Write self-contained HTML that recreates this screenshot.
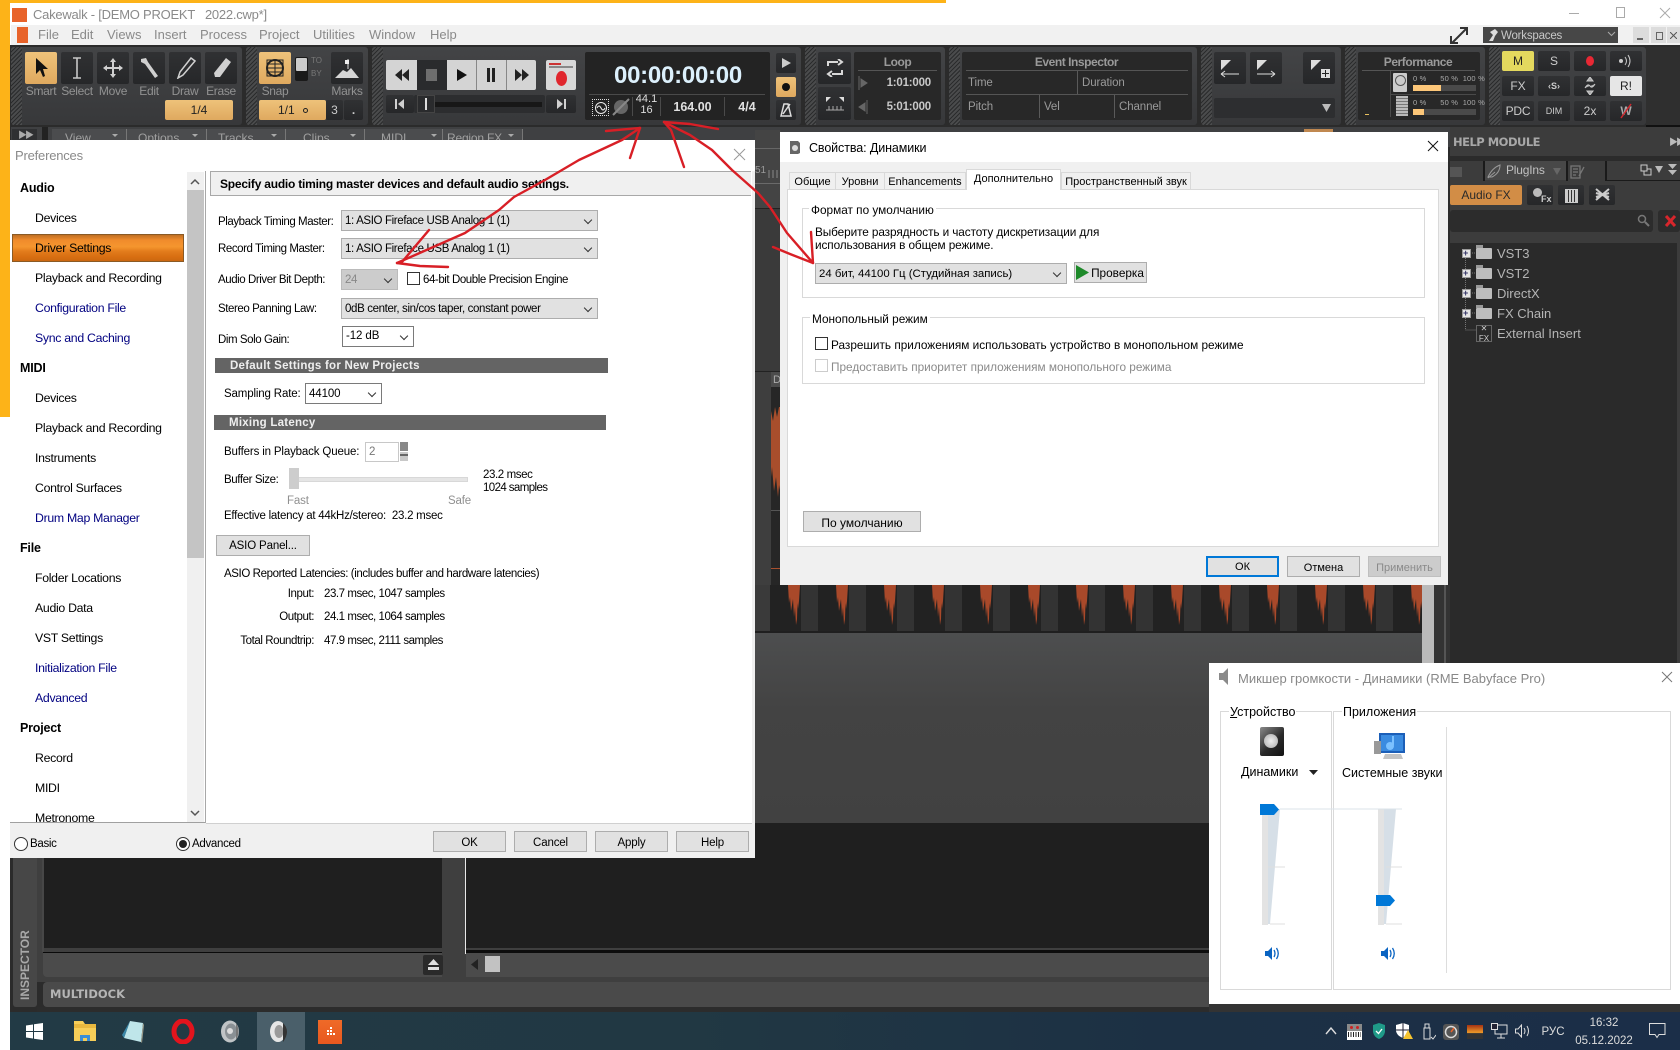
<!DOCTYPE html>
<html><head><meta charset="utf-8"><title>Cakewalk</title>
<style>
html,body{margin:0;padding:0;background:#fff}
#r{position:relative;width:1680px;height:1050px;overflow:hidden;background:#fff;font-family:"Liberation Sans","Noto Sans CJK SC",sans-serif;font-size:12px;color:#000}
#r div,#r svg{position:absolute}
.t{white-space:nowrap;line-height:16px;height:16px}
.p{background:linear-gradient(#434446,#37383a);border-radius:3px}
.p::before{content:"";position:absolute;left:0;top:0;bottom:0;width:11px;background:repeating-linear-gradient(135deg,#2a2b2c 0 1px,#4a4b4c 1px 3px);border-radius:3px 0 0 3px}
.b{background:linear-gradient(#303133,#262729);border-radius:2px}
.o{background:linear-gradient(#eec27a,#dfa95f);border-radius:2px}
.g{color:#929292;font-size:12px;text-align:center;letter-spacing:-.3px}
.w{background:#282828;border-radius:2px}
.dl{background:#5a5a5a}
.l{color:#9a9a9a;font-size:11.5px;letter-spacing:-.1px}
.ttl{color:#9a9a9a;font-size:12px;font-weight:bold;text-align:center;letter-spacing:-.45px}
.sel{background:#e1e1e1;border:1px solid #adadad;box-sizing:border-box;line-height:20px;padding-left:3px;font-size:11.5px;white-space:nowrap;letter-spacing:-.36px}
.sel::after{content:"";position:absolute;right:6px;top:50%;width:5px;height:5px;border-right:1px solid #333;border-bottom:1px solid #333;transform:translateY(-4px) rotate(45deg)}
.sw{background:#fff;border-color:#7a7a7a;letter-spacing:-.1px}
.btn{background:#e1e1e1;border:1px solid #adadad;box-sizing:border-box;text-align:center;line-height:21px;font-size:11.5px;white-space:nowrap;letter-spacing:-.15px}
.tr{font-size:12.3px;letter-spacing:-.3px}
.h{font-weight:bold;font-size:12.5px;letter-spacing:-.2px}
.bl{color:#000080}
.f{font-size:11.5px;letter-spacing:-.15px;margin-top:1px}
.fs{letter-spacing:-.43px}
.bar{background:#646464;color:#eee;font-weight:bold;font-size:11.5px;line-height:16px;white-space:nowrap;letter-spacing:.25px}
.ru{font-size:11.8px;white-space:nowrap;line-height:14px;height:14px;margin-top:1px}
.gb{border:1px solid #d9d9d9;box-sizing:border-box}
.tab{background:#f0f0f0;border:1px solid #d9d9d9;box-sizing:border-box;text-align:center;font-size:11px;line-height:18px;white-space:nowrap}
.tree{color:#b5b5b5;font-size:13px;left:1497px}
.plus{left:1462px;width:7px;height:7px;border:1px solid #9a9a9a;background:#e5e5e5}
.plus::after{content:"+";position:absolute;left:0;top:-4px;font-size:9px;font-weight:bold;color:#336;line-height:14px}
.fold{left:1476px;width:16px;height:11px;background:#bdbdbd;border-radius:1px}
.fold::before{content:"";position:absolute;left:0;top:-3px;width:7px;height:3px;background:#9a9a9a}
.m{font-family:"Liberation Sans",sans-serif;font-size:12.5px;white-space:nowrap}
.cell{top:585px;width:31px;height:46px;background:#222}
.ch{top:134px;width:0;height:0;border-left:3px solid transparent;border-right:3px solid transparent;border-top:3px solid #aaa}
</style></head><body><div id="r">

<!-- yellow desktop accents -->
<div style="left:0;top:0;width:946px;height:3px;background:#fdb318"></div>
<div style="left:0;top:0;width:10px;height:417px;background:#fdb318"></div>

<!-- title -->
<div style="left:12px;top:8px;width:15px;height:14px;background:#e8632a"></div>
<div class="t" style="left:33px;top:7px;color:#8a8a8a;font-size:13px;white-space:pre;letter-spacing:-.24px">Cakewalk - [DEMO PROEKT   2022.cwp*]</div>
<div style="left:1569px;top:13px;width:10px;height:1px;background:#aaa"></div>
<div style="left:1616px;top:7px;width:7px;height:9px;border:1px solid #aaa"></div>
<svg style="left:1659px;top:7px" width="12" height="12"><path d="M1 1L11 11M11 1L1 11" stroke="#aaa"/></svg>

<!-- menu -->
<div style="left:11px;top:25px;width:1669px;height:20px;background:#f1f1f1"></div>
<div style="left:17px;top:27px;width:11px;height:16px;background:#e8632a"></div>
<div class="t" style="left:38px;top:27px;color:#8a8a8a;font-size:13px">File</div>
<div class="t" style="left:71px;top:27px;color:#8a8a8a;font-size:13px">Edit</div>
<div class="t" style="left:107px;top:27px;color:#8a8a8a;font-size:13px">Views</div>
<div class="t" style="left:154px;top:27px;color:#8a8a8a;font-size:13px">Insert</div>
<div class="t" style="left:200px;top:27px;color:#8a8a8a;font-size:13px">Process</div>
<div class="t" style="left:259px;top:27px;color:#8a8a8a;font-size:13px">Project</div>
<div class="t" style="left:313px;top:27px;color:#8a8a8a;font-size:13px">Utilities</div>
<div class="t" style="left:369px;top:27px;color:#8a8a8a;font-size:13px">Window</div>
<div class="t" style="left:430px;top:27px;color:#8a8a8a;font-size:13px">Help</div>
<svg style="left:1450px;top:27px" width="18" height="17"><path d="M2 16L16 2M10 1H17V8M1 9V16H8" stroke="#333" stroke-width="2" fill="none"/></svg>
<div style="left:1483px;top:27px;width:135px;height:16px;background:#474747"></div>
<svg style="left:1487px;top:28px" width="14" height="14"><path d="M2 13L6 7 3 4 8 1 11 4 8 8 6 13Z" fill="#ddd"/></svg>
<div class="t" style="left:1501px;top:28px;color:#c8c8c8;font-size:11.5px;letter-spacing:-.2px">Workspaces</div>
<svg style="left:1607px;top:31px" width="9" height="6"><path d="M1 1L4.500 4.500 8 1" stroke="#aaa" fill="none"/></svg>
<div style="left:1633px;top:27px;width:16px;height:16px;background:#dcdcdc"></div>
<div style="left:1637px;top:38px;width:6px;height:2px;background:#666"></div>
<div style="left:1651px;top:27px;width:15px;height:16px;background:#dcdcdc"></div>
<div style="left:1656px;top:32px;width:5px;height:6px;border:1px solid #666"></div>
<div style="left:1667px;top:27px;width:13px;height:16px;background:#dcdcdc"></div>
<svg style="left:1670px;top:32px" width="7" height="7"><path d="M0 0L7 7M7 0L0 7" stroke="#555"/></svg>

<!-- app body -->
<div style="left:10px;top:45px;width:1670px;height:967px;background:#2b2b2b"></div>

<!-- toolbar panels -->
<div class="p" style="left:11px;top:47px;width:231px;height:78px"></div>
<div class="b o" style="left:25px;top:52px;width:32px;height:32px"></div>
<svg style="left:34px;top:57px" width="16" height="22"><path d="M2 1V17L6 13 9 20 11 19 9 12 14 12Z" fill="#111"/></svg>
<div class="b" style="left:61px;top:52px;width:32px;height:32px"></div>
<svg style="left:70px;top:56px" width="14" height="24"><path d="M3 2H11M7 2V22M3 22H11" stroke="#c8c8c8" stroke-width="1.600" fill="none"/></svg>
<div class="b" style="left:97px;top:52px;width:32px;height:32px"></div>
<svg style="left:102px;top:57px" width="22" height="22"><path d="M11 1L14 5H12V10H17V8L21 11 17 14V12H12V17H14L11 21 8 17H10V12H5V14L1 11 5 8V10H10V5H8Z" fill="#d0d0d0"/></svg>
<div class="b" style="left:133px;top:52px;width:32px;height:32px"></div>
<svg style="left:139px;top:57px" width="22" height="23"><path d="M2 2L7 1 9 5 19 19 16 21 6 7 2 5Z" fill="#d0d0d0"/></svg>
<div class="b" style="left:169px;top:52px;width:32px;height:32px"></div>
<svg style="left:176px;top:57px" width="20" height="22"><path d="M15 1L19 4 7 18 2 21 4 15Z" fill="none" stroke="#d0d0d0" stroke-width="1.500"/></svg>
<div class="b" style="left:205px;top:52px;width:32px;height:32px"></div>
<svg style="left:212px;top:57px" width="20" height="22"><path d="M14 1L19 5 8 20H3L2 16Z" fill="#d0d0d0"/></svg>
<div class="t g" style="left:21px;top:83px;width:40px">Smart</div>
<div class="t g" style="left:57px;top:83px;width:40px">Select</div>
<div class="t g" style="left:93px;top:83px;width:40px">Move</div>
<div class="t g" style="left:129px;top:83px;width:40px">Edit</div>
<div class="t g" style="left:165px;top:83px;width:40px">Draw</div>
<div class="t g" style="left:201px;top:83px;width:40px">Erase</div>
<div class="o" style="left:165px;top:100px;width:68px;height:20px"></div>
<div class="t" style="left:165px;top:102px;width:68px;text-align:center;color:#222">1/4</div>

<div class="p" style="left:246px;top:47px;width:122px;height:78px"></div>
<div class="o" style="left:259px;top:52px;width:32px;height:32px"></div>
<svg style="left:265px;top:58px" width="20" height="20"><circle cx="10" cy="10" r="8" fill="none" stroke="#222" stroke-width="2"/><path d="M2 10H18M10 2V18M4 6H16M4 14H16" stroke="#222"/><rect x="2" y="2" width="16" height="16" fill="none" stroke="#222"/></svg>
<div style="left:295px;top:57px;width:13px;height:24px;background:#1a1a1a;border-radius:2px"></div>
<div style="left:296px;top:58px;width:11px;height:13px;background:#ccc;border-radius:1px"></div>
<div class="t" style="left:311px;top:53px;color:#777;font-size:8px">TO</div>
<div class="t" style="left:311px;top:66px;color:#777;font-size:8px">BY</div>
<div class="b" style="left:331px;top:52px;width:32px;height:32px"></div>
<svg style="left:334px;top:58px" width="26" height="22"><path d="M1 20L9 12 13 14 17 10 25 20Z" fill="#d5d5d5"/><path d="M14 1V11" stroke="#ddd"/><path d="M11 2H15V6H11Z" fill="#eee"/></svg>
<div class="t g" style="left:257px;top:83px;width:36px">Snap</div>
<div class="t g" style="left:329px;top:83px;width:36px">Marks</div>
<div class="o" style="left:259px;top:100px;width:67px;height:20px"></div>
<div class="t" style="left:278px;top:102px;color:#222">1/1</div><div style="left:303px;top:108px;width:3px;height:3px;border:1px solid #222;border-radius:50%"></div>
<div class="b" style="left:326px;top:100px;width:17px;height:20px"></div><div class="t" style="left:326px;top:102px;width:17px;text-align:center;color:#ccc">3</div>
<div class="b" style="left:344px;top:100px;width:19px;height:20px"></div><div class="t" style="left:344px;top:102px;width:19px;text-align:center;color:#ccc;font-weight:bold">.</div>

<div class="p" style="left:372px;top:47px;width:429px;height:78px"></div>
<div style="left:386px;top:60px;width:150px;height:30px;background:#d4d4d4;border-radius:2px"></div>
<div style="left:417px;top:60px;width:30px;height:30px;background:#2a2b2d"></div>
<div style="left:476px;top:60px;width:1px;height:30px;background:#888"></div>
<div style="left:506px;top:60px;width:1px;height:30px;background:#888"></div>
<svg style="left:394px;top:68px" width="16" height="14"><path d="M8 1L1 7 8 13ZM15 1L8 7 15 13Z" fill="#222"/></svg>
<div style="left:426px;top:69px;width:11px;height:12px;background:#6e6e6e"></div>
<svg style="left:456px;top:68px" width="12" height="14"><path d="M1 1L11 7 1 13Z" fill="#111"/></svg>
<div style="left:487px;top:68px;width:3px;height:14px;background:#222"></div><div style="left:492px;top:68px;width:3px;height:14px;background:#222"></div>
<svg style="left:514px;top:68px" width="16" height="14"><path d="M1 1L8 7 1 13ZM8 1L15 7 8 13Z" fill="#222"/></svg>
<div style="left:546px;top:60px;width:30px;height:30px;background:#d8d8d8;border-radius:2px"></div>
<div style="left:549px;top:63px;width:12px;height:2px;background:#c33"></div><div style="left:549px;top:66px;width:24px;height:2px;background:#888"></div>
<div style="left:556px;top:71px;width:11px;height:15px;background:#e0262d;border-radius:50%"></div>
<div class="b" style="left:386px;top:95px;width:28px;height:18px"></div>
<svg style="left:395px;top:99px" width="10" height="10"><path d="M0 0H2V10H0ZM9 0V10L3 5Z" fill="#d0d0d0"/></svg>
<div class="b" style="left:414px;top:95px;width:131px;height:18px;background:#2c2d2f"></div>
<div style="left:417px;top:102px;width:125px;height:5px;background:#171717"></div>
<div style="left:417px;top:95px;width:18px;height:18px;background:#2a2b2d;border:1px solid #444;box-sizing:border-box"></div>
<div style="left:425px;top:98px;width:2px;height:12px;background:#ddd"></div>
<div class="b" style="left:546px;top:95px;width:30px;height:18px"></div>
<svg style="left:556px;top:99px" width="10" height="10"><path d="M1 0L7 5 1 10ZM8 0H10V10H8Z" fill="#d0d0d0"/></svg>

<div style="left:585px;top:52px;width:185px;height:68px;background:#232323;border-radius:2px"></div>
<div class="t" style="left:585px;top:63px;width:186px;height:26px;line-height:26px;text-align:center;color:#dcf0fc;font-size:24px;font-weight:bold;letter-spacing:-.25px">00:00:00:00</div>
<div style="left:589px;top:94px;width:176px;height:1px;background:#4a4a4a"></div>
<div style="left:592px;top:99px;width:15px;height:15px;border:1px dotted #ddd;background:#222"></div>
<svg style="left:594px;top:101px" width="14" height="14"><circle cx="7" cy="7" r="5.500" fill="none" stroke="#eee"/><path d="M3 7Q5 3 7 7T11 7" stroke="#eee" fill="none"/></svg>
<svg style="left:612px;top:98px" width="18" height="18"><circle cx="9" cy="9" r="7" fill="#666"/><path d="M1 17L17 1" stroke="#888" stroke-width="2"/></svg>
<div style="left:632px;top:97px;width:1px;height:19px;background:#4a4a4a"></div>
<div style="left:660px;top:97px;width:1px;height:19px;background:#4a4a4a"></div>
<div style="left:724px;top:97px;width:1px;height:19px;background:#4a4a4a"></div>
<div class="t" style="left:633px;top:93px;width:27px;text-align:center;color:#ddd;font-size:11px;line-height:13px">44.1</div>
<div class="t" style="left:633px;top:104px;width:27px;text-align:center;color:#ddd;font-size:11px;line-height:13px">16</div>
<div class="t" style="left:661px;top:99px;width:63px;text-align:center;color:#e0e0e0;font-size:12.5px;font-weight:bold">164.00</div>
<div class="t" style="left:725px;top:99px;width:44px;text-align:center;color:#e0e0e0;font-size:12.5px;font-weight:bold">4/4</div>
<div class="b" style="left:776px;top:53px;width:20px;height:20px"></div>
<svg style="left:782px;top:58px" width="9" height="10"><path d="M0 0L9 5 0 10Z" fill="#ccc"/></svg>
<div class="o" style="left:776px;top:77px;width:20px;height:20px"></div>
<div style="left:782px;top:83px;width:8px;height:8px;background:#111;border-radius:50%"></div>
<div class="b" style="left:776px;top:100px;width:20px;height:20px"></div>
<svg style="left:779px;top:102px" width="14" height="16"><path d="M5 2H9L12 14H2ZM4 12L11 2" fill="none" stroke="#ddd" stroke-width="1.500"/></svg>

<div class="p" style="left:805px;top:47px;width:140px;height:78px"></div>
<div class="b" style="left:818px;top:52px;width:33px;height:32px"></div>
<svg style="left:824px;top:59px" width="22" height="18"><path d="M4 7V3H14M18 11V15H8M14 0L18 3 14 6M8 12L4 15 8 18" stroke="#d8d8d8" stroke-width="2" fill="none"/></svg>
<div class="b" style="left:818px;top:87px;width:33px;height:33px"></div>
<svg style="left:825px;top:96px" width="20" height="16"><path d="M1 1H6L1 6ZM19 1H14L19 6Z" fill="#ddd"/><path d="M1 14H19M4 10V14M8 10V14M12 10V14M16 10V14" stroke="#aaa"/></svg>
<div class="w" style="left:854px;top:52px;width:87px;height:68px"></div>
<div class="t ttl" style="left:854px;top:54px;width:87px">Loop</div>
<div style="left:858px;top:70px;width:79px;height:1px;background:#555"></div>
<div class="t" style="right:749px;top:75px;color:#c8c8c8;font-size:11.5px;font-weight:bold;letter-spacing:-.2px">1:01:000</div>
<div class="t" style="right:749px;top:99px;color:#c8c8c8;font-size:11.5px;font-weight:bold;letter-spacing:-.2px">5:01:000</div>
<svg style="left:858px;top:76px" width="10" height="14"><path d="M1 0V14M3 3L9 7 3 11Z" stroke="#666" fill="#666"/></svg>
<svg style="left:858px;top:100px" width="10" height="14"><path d="M9 0V14M7 3L1 7 7 11Z" stroke="#666" fill="#666"/></svg>

<div class="p" style="left:949px;top:47px;width:248px;height:78px"></div>
<div class="w" style="left:962px;top:52px;width:230px;height:68px"></div>
<div class="t ttl" style="left:962px;top:54px;width:229px">Event Inspector</div>
<div style="left:966px;top:70px;width:222px;height:1px;background:#555"></div>
<div style="left:966px;top:94px;width:222px;height:1px;background:#555"></div>
<div class="dl" style="left:1077px;top:71px;width:1px;height:23px"></div>
<div class="dl" style="left:1039px;top:95px;width:1px;height:23px"></div>
<div class="dl" style="left:1114px;top:95px;width:1px;height:23px"></div>
<div class="t l" style="left:968px;top:75px">Time</div><div class="t l" style="left:1082px;top:75px">Duration</div>
<div class="t l" style="left:968px;top:99px">Pitch</div><div class="t l" style="left:1044px;top:99px">Vel</div><div class="t l" style="left:1119px;top:99px">Channel</div>

<div class="p" style="left:1201px;top:47px;width:140px;height:78px"></div>
<div class="b" style="left:1214px;top:52px;width:32px;height:32px"></div>
<svg style="left:1220px;top:59px" width="20" height="20"><path d="M1 1H11L1 11Z" fill="#ddd"/><path d="M1 15H19M1 15L5 12M1 15L5 18" stroke="#ddd" fill="none"/></svg>
<div class="b" style="left:1250px;top:52px;width:32px;height:32px"></div>
<svg style="left:1256px;top:59px" width="20" height="20"><path d="M1 1H11L1 11Z" fill="#ddd"/><path d="M1 15H19M19 15L15 12M19 15L15 18" stroke="#ddd" fill="none"/></svg>
<div class="b" style="left:1303px;top:52px;width:32px;height:32px"></div>
<svg style="left:1310px;top:59px" width="20" height="20"><path d="M1 1H11L1 11Z" fill="#ddd"/><rect x="11" y="10" width="9" height="9" fill="#ddd"/><path d="M15.500 11V18M12 14.500H19" stroke="#222"/></svg>
<div class="b" style="left:1214px;top:98px;width:121px;height:20px;background:#2d2e30"></div>
<svg style="left:1322px;top:104px" width="9" height="8"><path d="M0 0H9L4.500 8Z" fill="#bbb"/></svg>

<div class="p" style="left:1345px;top:47px;width:140px;height:78px"></div>
<div class="w" style="left:1358px;top:52px;width:122px;height:68px"></div>
<div class="t ttl" style="left:1358px;top:54px;width:120px">Performance</div>
<div style="left:1362px;top:70px;width:113px;height:1px;background:#555"></div>
<div style="left:1390px;top:71px;width:1px;height:46px;background:#4a4a4a"></div>
<div style="left:1391px;top:94px;width:85px;height:1px;background:#4a4a4a"></div>
<div style="left:1393px;top:73px;width:14px;height:19px;background:#ccc;border-radius:1px"></div>
<div style="left:1395px;top:75px;width:9px;height:9px;border:1px solid #555;border-radius:50%"></div>
<div style="left:1396px;top:96px;width:12px;height:20px;background:repeating-linear-gradient(#bbb 0 2px,#777 2px 3px)"></div>
<div class="t" style="left:1413px;top:71px;color:#aaa;font-size:7.500px;letter-spacing:.2px;white-space:pre">0 %      50 %  100 %</div>
<div class="t" style="left:1413px;top:95px;color:#aaa;font-size:7.500px;letter-spacing:.2px;white-space:pre">0 %      50 %  100 %</div>
<div style="left:1413px;top:85px;width:63px;height:6px;background:#4a4a4a"></div><div style="left:1413px;top:85px;width:28px;height:6px;background:#fdc779"></div>
<div style="left:1413px;top:109px;width:63px;height:6px;background:#4a4a4a"></div><div style="left:1413px;top:109px;width:11px;height:6px;background:#fdc779"></div>
<div style="left:1365px;top:114px;width:4px;height:1px;background:#e8c060"></div>

<div class="p" style="left:1489px;top:47px;width:157px;height:78px"></div>
<div style="left:1502px;top:51px;width:32px;height:20px;background:#e4d95e;border-radius:2px"></div>
<div class="t" style="left:1502px;top:53px;width:32px;text-align:center;font-size:12px;color:#222">M</div>
<div class="b" style="left:1538px;top:51px;width:32px;height:20px"></div><div class="t" style="left:1538px;top:53px;width:32px;text-align:center;color:#ccc;font-size:12px">S</div>
<div class="b" style="left:1574px;top:51px;width:32px;height:20px"></div><div style="left:1586px;top:56px;width:8px;height:10px;background:#e82834;border-radius:50%"></div>
<div class="b" style="left:1610px;top:51px;width:32px;height:20px"></div>
<svg style="left:1618px;top:54px" width="16" height="14"><circle cx="3" cy="7" r="2" fill="#ccc"/><path d="M7 3Q10 7 7 11M10 1Q14 7 10 13" stroke="#ccc" fill="none"/></svg>
<div class="b" style="left:1502px;top:76px;width:32px;height:20px"></div><div class="t" style="left:1502px;top:78px;width:32px;text-align:center;color:#ccc;font-size:12px">FX</div>
<div class="b" style="left:1538px;top:76px;width:32px;height:20px"></div><div class="t" style="left:1538px;top:78px;width:32px;text-align:center;color:#ccc;font-size:9px;font-weight:bold">‹S›</div>
<div class="b" style="left:1574px;top:76px;width:32px;height:20px"></div>
<svg style="left:1583px;top:77px" width="14" height="18"><path d="M7 0L10 4H4ZM7 18L10 14H4ZM2 11Q5 6 7 9T12 7" stroke="#ccc" fill="#ccc" fill-opacity=".8" stroke-width="1"/></svg>
<div style="left:1610px;top:76px;width:32px;height:20px;background:#e6e6e6;border-radius:2px"></div><div class="t" style="left:1610px;top:78px;width:32px;text-align:center;color:#222;font-size:12px">R!</div>
<div class="b" style="left:1502px;top:101px;width:32px;height:20px"></div><div class="t" style="left:1502px;top:103px;width:32px;text-align:center;color:#ccc;font-size:12px;letter-spacing:-.2px">PDC</div>
<div class="b" style="left:1538px;top:101px;width:32px;height:20px"></div><div class="t" style="left:1538px;top:103px;width:32px;text-align:center;color:#ccc;font-size:9px">DIM</div>
<div class="b" style="left:1574px;top:101px;width:32px;height:20px"></div><div class="t" style="left:1574px;top:103px;width:32px;text-align:center;color:#ccc;font-size:12px">2x</div>
<div class="b" style="left:1610px;top:101px;width:32px;height:20px"></div><div class="t" style="left:1610px;top:103px;width:32px;text-align:center;color:#aaa;font-size:12px;font-weight:bold">W</div>
<svg style="left:1619px;top:103px" width="14" height="16"><path d="M2 15L12 1" stroke="#d0282e" stroke-width="1.500"/></svg>
<div style="left:1646px;top:47px;width:34px;height:78px;background:#2f2f2f"></div>
<div style="left:1646px;top:125px;width:34px;height:2px;background:#111"></div>

<!-- secondary toolbar row -->
<div style="left:11px;top:127px;width:1439px;height:20px;background:#3f4042"></div>
<div style="left:12px;top:129px;width:25px;height:11px;background:#2f3032"></div>
<div class="t" style="left:18px;top:127px;color:#aaa;font-size:9px;letter-spacing:-2px">▶▶</div>
<div style="left:42px;top:127px;width:6px;height:13px;background:#222"></div>
<div style="left:52px;top:129px;width:470px;height:11px;background:#4b4c4e"></div>
<div class="t" style="left:65px;top:130px;color:#a0a0a0">View</div><div class="t" style="left:138px;top:130px;color:#a0a0a0">Options</div><div class="t" style="left:218px;top:130px;color:#a0a0a0">Tracks</div><div class="t" style="left:303px;top:130px;color:#a0a0a0">Clips</div><div class="t" style="left:381px;top:130px;color:#a0a0a0">MIDI</div><div class="t" style="left:447px;top:130px;color:#a0a0a0;letter-spacing:-.2px">Region FX</div>
<div style="left:126px;top:129px;width:1px;height:11px;background:#777"></div><div style="left:206px;top:129px;width:1px;height:11px;background:#777"></div><div style="left:285px;top:129px;width:1px;height:11px;background:#777"></div><div style="left:364px;top:129px;width:1px;height:11px;background:#777"></div><div style="left:442px;top:129px;width:1px;height:11px;background:#777"></div><div style="left:522px;top:129px;width:1px;height:11px;background:#777"></div>
<div class="ch" style="left:112px"></div><div class="ch" style="left:192px"></div><div class="ch" style="left:271px"></div><div class="ch" style="left:350px"></div><div class="ch" style="left:431px"></div><div class="ch" style="left:508px"></div>
<div style="left:1304px;top:129px;width:29px;height:5px;background:#c08850"></div>

<!-- middle strip between dialogs -->
<div style="left:752px;top:140px;width:3px;height:718px;background:#dcdcdc"></div>
<div style="left:755px;top:130px;width:26px;height:78px;background:#444"></div>
<div style="left:755px;top:148px;width:26px;height:1px;background:#666"></div>
<div style="left:755px;top:183px;width:26px;height:1px;background:#6a6a6a"></div>
<div class="t" style="left:755px;top:163px;color:#9a9a9a;font-size:10px">51</div>
<svg style="left:768px;top:170px" width="13" height="8"><path d="M1 0V8M5 0V8M9 0V8" stroke="#888"/></svg>
<div style="left:755px;top:208px;width:26px;height:1px;background:#222"></div>
<div style="left:755px;top:209px;width:26px;height:162px;background:#3a3a3a"></div>
<div style="left:755px;top:371px;width:26px;height:1px;background:#222"></div>
<div style="left:755px;top:372px;width:16px;height:213px;background:#3e3e3e"></div>
<div style="left:771px;top:372px;width:10px;height:261px;background:#262626"></div>
<div style="left:771px;top:372px;width:10px;height:15px;background:#4c4c4c"></div>
<div class="t" style="left:773px;top:372px;color:#aaa;font-size:11px">D</div>
<svg style="left:771px;top:407px" width="10" height="92"><path d="M0 4L2 14 4 0 6 10 8 0H10V88L8 78 7 90 5 70 3 84 1 60 0 70Z" fill="#a84e2c"/></svg>
<div style="left:771px;top:510px;width:10px;height:1px;background:#555"></div>
<div style="left:771px;top:568px;width:10px;height:1px;background:#a8502f"></div>

<!-- clips strip -->
<div style="left:755px;top:585px;width:667px;height:48px;background:#333"></div>
<div style="left:755px;top:585px;width:15px;height:46px;background:#3a3a3a"></div>
<div class="cell" style="left:770px"></div><div class="cell" style="left:818px"></div><div class="cell" style="left:866px"></div><div class="cell" style="left:914px"></div><div class="cell" style="left:962px"></div><div class="cell" style="left:1010px"></div><div class="cell" style="left:1058px"></div><div class="cell" style="left:1105px"></div><div class="cell" style="left:1153px"></div><div class="cell" style="left:1201px"></div><div class="cell" style="left:1249px"></div><div class="cell" style="left:1297px"></div><div class="cell" style="left:1345px"></div><div class="cell" style="left:1393px"></div>
<svg style="left:0;top:585px" width="1430" height="42"><path id="w" d="M788 0H800L799 16 798 24 797.500 18 797 34 796 40 795 22 794 32 793 14 791 26 790 12 789 18Z" fill="#a9492a"/><use href="#w" x="48"/><use href="#w" x="96"/><use href="#w" x="144"/><use href="#w" x="192"/><use href="#w" x="240"/><use href="#w" x="288"/><use href="#w" x="335"/><use href="#w" x="383"/><use href="#w" x="431"/><use href="#w" x="479"/><use href="#w" x="527"/><use href="#w" x="575"/><use href="#w" x="623"/></svg>
<div style="left:755px;top:631px;width:667px;height:2px;background:#1f1f1f"></div>
<div style="left:755px;top:633px;width:695px;height:190px;background:linear-gradient(#4d4e4f,#434343 40%,#414141)"></div>
<div style="left:1422px;top:585px;width:12px;height:78px;background:#bababa"></div>
<div style="left:1434px;top:585px;width:16px;height:240px;background:#333"></div>
<div style="left:1444px;top:585px;width:2px;height:240px;background:#555"></div>

<!-- track/inspector bottom -->
<div style="left:13px;top:858px;width:24px;height:149px;background:#474747;border-radius:0 0 3px 3px"></div>
<div class="t" style="left:-11px;top:956px;width:72px;color:#a9a9a9;font-weight:bold;font-size:12px;transform:rotate(-90deg);text-align:left">INSPECTOR</div>
<div style="left:37px;top:858px;width:1173px;height:124px;background:#3f3f3f"></div>
<div style="left:44px;top:858px;width:398px;height:90px;background:#1f1f1f"></div>
<div style="left:42px;top:858px;width:2px;height:94px;background:#474747"></div>
<div style="left:43px;top:952px;width:399px;height:1px;background:#0a0a0a"></div>
<div style="left:43px;top:953px;width:399px;height:24px;background:#4b4b4b;border-radius:0 0 0 4px"></div>
<div style="left:423px;top:955px;width:20px;height:20px;background:#2a2a2a;border-radius:2px"></div>
<svg style="left:428px;top:959px" width="11" height="12"><path d="M5.500 0L11 6H0ZM0 8H11V11H0Z" fill="#e0e0e0"/></svg>
<div style="left:465px;top:823px;width:745px;height:125px;background:#1f1f1f"></div>
<div style="left:465px;top:858px;width:1px;height:96px;background:#e8e8e8"></div>
<div style="left:466px;top:950px;width:744px;height:3px;background:#0d0d0d"></div>
<div style="left:466px;top:953px;width:744px;height:24px;background:#4b4b4b"></div>
<svg style="left:471px;top:959px" width="7" height="11"><path d="M7 0V11L0 5.500Z" fill="#222"/></svg>
<div style="left:485px;top:956px;width:15px;height:16px;background:#c2c2c2"></div>
<div style="left:43px;top:982px;width:1167px;height:25px;background:#4a4a4a;border-radius:4px 0 0 4px"></div>
<div class="t" style="left:50px;top:986px;color:#b5b5b5;font-family:'DejaVu Sans','Liberation Sans',sans-serif;font-weight:bold;font-size:11.500px">MULTIDOCK</div>
<div style="left:37px;top:1007px;width:1643px;height:5px;background:#2c2c2c"></div>

<!-- right panel -->
<div style="left:1450px;top:127px;width:230px;height:885px;background:#3c3c3c"></div>
<div class="t" style="left:1453px;top:134px;color:#a8a8a8;font-family:'DejaVu Sans','Liberation Sans',sans-serif;font-weight:bold;font-size:11.5px;letter-spacing:-.5px">HELP MODULE</div>
<div class="t" style="left:1669px;top:134px;color:#bbb;font-size:9px;letter-spacing:-2px">▶▶</div>
<div style="left:1450px;top:156px;width:230px;height:5px;background:#2b2b2b"></div>
<div style="left:1450px;top:161px;width:33px;height:20px;background:#3c3c3c"></div>
<div style="left:1450px;top:167px;width:12px;height:10px;background:#555"></div>
<div style="left:1483px;top:161px;width:2px;height:20px;background:#1a1a1a"></div>
<div style="left:1485px;top:161px;width:81px;height:19px;background:#484848"></div>
<svg style="left:1487px;top:164px" width="16" height="15"><path d="M1 13Q5 4 13 1 13 9 5 13ZM1 14L8 8" fill="none" stroke="#999"/></svg>
<div class="t" style="left:1506px;top:162px;color:#c0c0c0;font-size:12px;letter-spacing:-.2px">PlugIns</div>
<svg style="left:1553px;top:168px" width="8" height="7"><path d="M0 0H8L4 7Z" fill="#666"/></svg>
<div style="left:1566px;top:161px;width:2px;height:20px;background:#1a1a1a"></div>
<svg style="left:1570px;top:164px" width="16" height="15"><path d="M1 2H10V14H1ZM3 5H8M3 8H8M3 11H6M9 12L14 3" fill="none" stroke="#777" stroke-width="1.300"/></svg>
<div style="left:1605px;top:161px;width:2px;height:20px;background:#1a1a1a"></div>
<div style="left:1607px;top:180px;width:73px;height:1px;background:#1a1a1a"></div>
<svg style="left:1640px;top:164px" width="12" height="13"><path d="M1 1H7V7H1ZM4 7V11H11V5H7" fill="none" stroke="#ccc"/></svg>
<svg style="left:1655px;top:166px" width="8" height="8"><path d="M0 0H8L4 7Z" fill="#bbb"/></svg>
<svg style="left:1668px;top:164px" width="9" height="12"><path d="M0 0H9L4.500 5ZM0 6H9L4.500 11Z" fill="#bbb"/></svg>
<div style="left:1450px;top:185px;width:72px;height:20px;background:#d28d46;border-radius:2px"></div>
<div class="t" style="left:1450px;top:187px;width:72px;text-align:center;color:#2a2a2a;font-size:12px">Audio FX</div>
<div class="b" style="left:1527px;top:185px;width:26px;height:20px"></div>
<div style="left:1533px;top:188px;width:9px;height:9px;background:#bbb;border-radius:50%"></div>
<div class="t" style="left:1541px;top:192px;color:#ccc;font-size:9px;font-weight:bold;line-height:14px;height:14px">Fx</div>
<div class="b" style="left:1558px;top:185px;width:26px;height:20px"></div>
<div style="left:1565px;top:189px;width:11px;height:12px;border:1px solid #ccc;background:repeating-linear-gradient(90deg,#ccc 0 2px,#333 2px 3px)"></div>
<div class="b" style="left:1589px;top:185px;width:26px;height:20px"></div>
<svg style="left:1595px;top:187px" width="15" height="15"><path d="M1 2L14 13M1 6L14 10M1 10L14 6M1 13L14 2" stroke="#ccc" stroke-width="2"/></svg>
<div style="left:1450px;top:210px;width:203px;height:22px;background:#2c2c2c;border-radius:3px"></div>
<svg style="left:1637px;top:214px" width="13" height="14"><circle cx="5" cy="5" r="3.500" fill="none" stroke="#777" stroke-width="1.500"/><path d="M8 8L12 12" stroke="#777" stroke-width="2"/></svg>
<div style="left:1658px;top:210px;width:22px;height:22px;background:#2c2c2c;border-radius:3px"></div>
<svg style="left:1665px;top:215px" width="11" height="12"><path d="M1 1L10 11M10 1L1 11" stroke="#d8262c" stroke-width="3"/></svg>
<div style="left:1450px;top:243px;width:227px;height:769px;background:#2a2a2a"></div>
<svg style="left:1460px;top:250px" width="20" height="90"><path d="M5.500 4V80H16M8 3H16M8 23H16M8 43H16M8 63H16" stroke="#777" stroke-dasharray="1 1" fill="none"/></svg>
<div class="plus" style="top:249px"></div><div class="plus" style="top:269px"></div><div class="plus" style="top:289px"></div><div class="plus" style="top:309px"></div>
<div class="fold" style="top:248px"></div><div class="fold" style="top:268px"></div><div class="fold" style="top:288px"></div><div class="fold" style="top:308px"></div>
<div class="t tree" style="top:246px">VST3</div><div class="t tree" style="top:266px">VST2</div><div class="t tree" style="top:286px">DirectX</div><div class="t tree" style="top:306px">FX Chain</div><div class="t tree" style="top:326px">External Insert</div>
<div style="left:1476px;top:325px;width:14px;height:15px;border:1px solid #666;background:#2a2a2a"></div>
<div class="t" style="left:1477px;top:324px;width:14px;text-align:center;color:#ccc;font-size:8px;line-height:10px">✕<br>FX</div>

<!-- mid gap filler to the mixer -->
<div style="left:1209px;top:1004px;width:471px;height:8px;background:#333"></div>

<!-- Preferences dialog -->
<div style="left:10px;top:140px;width:745px;height:718px;background:#f0f0f0"></div>
<div style="left:10px;top:140px;width:745px;height:31px;background:#fff"></div>
<div class="t" style="left:15px;top:148px;color:#8a8a8a;font-size:13px;letter-spacing:-.2px">Preferences</div>
<svg style="left:733px;top:148px" width="13" height="13"><path d="M1 1L12 12M12 1L1 12" stroke="#999"/></svg>
<div style="left:10px;top:171px;width:195px;height:651px;background:#fff;border-bottom:1px solid #a0a0a0;box-sizing:content-box"></div>
<div style="left:205px;top:171px;width:1px;height:652px;background:#a8a8a8"></div>
<div style="left:187px;top:172px;width:17px;height:650px;background:#f0f0f0"></div>
<div style="left:187px;top:190px;width:17px;height:368px;background:#c4c4c4"></div>
<svg style="left:190px;top:178px" width="10" height="7"><path d="M1 6L5 2 9 6" fill="none" stroke="#555" stroke-width="1.500"/></svg>
<svg style="left:190px;top:810px" width="10" height="7"><path d="M1 1L5 5 9 1" fill="none" stroke="#555" stroke-width="1.500"/></svg>
<div style="left:12px;top:234px;width:172px;height:28px;background:linear-gradient(#b66a22,#f08b2c 22%,#f5962e 45%,#e27c1c 62%,#d96f12 80%,#c8660f);box-shadow:inset 0 0 0 1px #8a5a25"></div>
<div style="left:10px;top:171px;width:177px;height:651px;overflow:hidden">
<div class="t tr h" style="top:9px;left:10px">Audio</div>
<div class="t tr" style="top:39px;left:25px">Devices</div>
<div class="t tr" style="top:69px;left:25px">Driver Settings</div>
<div class="t tr" style="top:99px;left:25px">Playback and Recording</div>
<div class="t tr bl" style="top:129px;left:25px">Configuration File</div>
<div class="t tr bl" style="top:159px;left:25px">Sync and Caching</div>
<div class="t tr h" style="top:189px;left:10px">MIDI</div>
<div class="t tr" style="top:219px;left:25px">Devices</div>
<div class="t tr" style="top:249px;left:25px">Playback and Recording</div>
<div class="t tr" style="top:279px;left:25px">Instruments</div>
<div class="t tr" style="top:309px;left:25px">Control Surfaces</div>
<div class="t tr bl" style="top:339px;left:25px">Drum Map Manager</div>
<div class="t tr h" style="top:369px;left:10px">File</div>
<div class="t tr" style="top:399px;left:25px">Folder Locations</div>
<div class="t tr" style="top:429px;left:25px">Audio Data</div>
<div class="t tr" style="top:459px;left:25px">VST Settings</div>
<div class="t tr bl" style="top:489px;left:25px">Initialization File</div>
<div class="t tr bl" style="top:519px;left:25px">Advanced</div>
<div class="t tr h" style="top:549px;left:10px">Project</div>
<div class="t tr" style="top:579px;left:25px">Record</div>
<div class="t tr" style="top:609px;left:25px">MIDI</div>
<div class="t tr" style="top:639px;left:25px">Metronome</div>
</div>
<div style="left:206px;top:171px;width:546px;height:652px;background:#fff;border-bottom:1px solid #d0d0d0"></div>
<div style="left:210px;top:171px;width:541px;height:25px;background:#f0f0f0;border:1px solid #a8a8a8;border-right:0;box-sizing:border-box"></div>
<div class="t" style="left:220px;top:176px;font-weight:bold;font-size:12px;letter-spacing:-.22px">Specify audio timing master devices and default audio settings.</div>
<div class="t f fs" style="left:218px;top:213px">Playback Timing Master:</div>
<div class="t f fs" style="left:218px;top:240px">Record Timing Master:</div>
<div class="t f fs" style="left:218px;top:271px">Audio Driver Bit Depth:</div>
<div class="t f fs" style="left:218px;top:300px">Stereo Panning Law:</div>
<div class="t f fs" style="left:218px;top:331px">Dim Solo Gain:</div>
<div class="sel" style="left:341px;top:210px;width:257px;height:21px">1: ASIO Fireface USB Analog 1 (1)</div>
<div class="sel" style="left:341px;top:238px;width:257px;height:21px">1: ASIO Fireface USB Analog 1 (1)</div>
<div class="sel" style="left:341px;top:269px;width:57px;height:21px;background:#ccc;border-color:#bbb;color:#888">24</div>
<div style="left:407px;top:272px;width:11px;height:11px;border:1px solid #333;background:#fff"></div>
<div class="t f fs" style="left:423px;top:271px">64-bit Double Precision Engine</div>
<div class="sel" style="left:341px;top:298px;width:257px;height:21px">0dB center, sin/cos taper, constant power</div>
<div class="sel sw" style="left:342px;top:326px;width:72px;height:21px;line-height:18px">-12 dB</div>
<div class="bar" style="left:215px;top:358px;width:393px;height:15px;padding-left:15px;box-sizing:border-box">Default Settings for New Projects</div>
<div class="t f" style="left:224px;top:385px">Sampling Rate:</div>
<div class="sel sw" style="left:305px;top:383px;width:77px;height:21px">44100</div>
<div class="bar" style="left:214px;top:415px;width:392px;height:15px;padding-left:15px;box-sizing:border-box">Mixing Latency</div>
<div class="t f" style="left:224px;top:443px">Buffers in Playback Queue:</div>
<div style="left:365px;top:442px;width:34px;height:20px;border:1px solid #c8c8c8;box-sizing:border-box;color:#777;padding-left:3px;line-height:18px;font-size:11.5px">2</div>
<div style="left:400px;top:442px;width:8px;height:9px;background:#888"></div><div style="left:400px;top:452px;width:8px;height:9px;background:#c8c8c8"></div><div style="left:400px;top:454px;width:8px;height:2px;background:#666"></div>
<div class="t f" style="left:224px;top:471px;letter-spacing:-.4px">Buffer Size:</div>
<div style="left:298px;top:477px;width:170px;height:5px;background:#e5e5e5;border:1px solid #d8d8d8;box-sizing:border-box"></div>
<div style="left:289px;top:468px;width:10px;height:21px;background:#cdcdcd"></div>
<div class="t f" style="left:483px;top:466px;letter-spacing:-.4px">23.2 msec</div>
<div class="t f" style="left:483px;top:479px;letter-spacing:-.6px">1024 samples</div>
<div class="t f" style="left:287px;top:492px;color:#909090">Fast</div>
<div class="t f" style="left:448px;top:492px;color:#909090">Safe</div>
<div class="t f" style="left:224px;top:507px;letter-spacing:-.25px;white-space:pre">Effective latency at 44kHz/stereo:  23.2 msec</div>
<div class="btn" style="left:216px;top:535px;width:94px;height:21px">ASIO Panel...</div>
<div class="t f" style="left:224px;top:565px;letter-spacing:-.4px">ASIO Reported Latencies: (includes buffer and hardware latencies)</div>
<div class="t f fs" style="right:1366px;top:585px">Input:</div><div class="t f" style="left:324px;top:585px;letter-spacing:-.45px">23.7 msec, 1047 samples</div>
<div class="t f fs" style="right:1366px;top:608px">Output:</div><div class="t f" style="left:324px;top:608px;letter-spacing:-.45px">24.1 msec, 1064 samples</div>
<div class="t f fs" style="right:1366px;top:632px">Total Roundtrip:</div><div class="t f" style="left:324px;top:632px;letter-spacing:-.45px">47.9 msec, 2111 samples</div>
<div style="left:14px;top:837px;width:12px;height:12px;border:1px solid #333;border-radius:50%;background:#fff"></div>
<div class="t f" style="left:30px;top:835px;letter-spacing:-.3px">Basic</div>
<div style="left:176px;top:837px;width:12px;height:12px;border:1px solid #333;border-radius:50%;background:#fff"></div>
<div style="left:179px;top:840px;width:8px;height:8px;border-radius:50%;background:#222"></div>
<div class="t f" style="left:192px;top:835px;letter-spacing:-.3px">Advanced</div>
<div class="btn" style="left:433px;top:831px;width:73px;height:21px;line-height:22px">OK</div>
<div class="btn" style="left:514px;top:831px;width:73px;height:21px;line-height:22px">Cancel</div>
<div class="btn" style="left:595px;top:831px;width:73px;height:21px;line-height:22px">Apply</div>
<div class="btn" style="left:676px;top:831px;width:73px;height:21px;line-height:22px">Help</div>

<!-- Properties dialog -->
<div style="left:780px;top:132px;width:668px;height:453px;background:#f0f0f0"></div>
<div style="left:780px;top:132px;width:668px;height:30px;background:#fff"></div>
<svg style="left:789px;top:140px" width="12" height="15"><path d="M1 1H9L11 3V13L9 14H1Z" fill="#666"/><circle cx="6" cy="8" r="3" fill="#ddd"/></svg>
<div class="t" style="left:809px;top:140px;font-size:12.5px;letter-spacing:-.1px">Свойства: Динамики</div>
<svg style="left:1427px;top:140px" width="12" height="12"><path d="M1 1L11 11M11 1L1 11" stroke="#111"/></svg>
<div style="left:787px;top:189px;width:652px;height:358px;background:#fff;border:1px solid #d9d9d9;box-sizing:border-box"></div>
<div class="tab" style="left:789px;top:172px;width:47px;height:18px">Общие</div>
<div class="tab" style="left:835px;top:172px;width:50px;height:18px">Уровни</div>
<div class="tab" style="left:884px;top:172px;width:82px;height:18px">Enhancements</div>
<div class="tab" style="left:966px;top:169px;width:95px;height:21px;background:#fff;border-bottom:0">Дополнительно</div>
<div class="tab" style="left:1061px;top:172px;width:130px;height:18px">Пространственный звук</div>
<div class="gb" style="left:802px;top:208px;width:623px;height:90px"></div>
<div class="ru" style="left:809px;top:202px;background:#fff;padding:0 2px">Формат по умолчанию</div>
<div class="ru" style="left:815px;top:224px;letter-spacing:-.1px">Выберите разрядность и частоту дискретизации для</div>
<div class="ru" style="left:815px;top:237px;letter-spacing:-.1px">использования в общем режиме.</div>
<div class="sel" style="left:815px;top:263px;width:252px;height:21px;font-size:11.4px;letter-spacing:0">24 бит, 44100 Гц (Студийная запись)</div>
<div class="btn" style="left:1074px;top:262px;width:73px;height:21px;padding-left:14px;font-size:11.8px;letter-spacing:0">Проверка</div>
<svg style="left:1076px;top:265px" width="13" height="15"><path d="M0 0L13 7.500 0 15Z" fill="#1e8a2a"/></svg>
<div class="gb" style="left:802px;top:317px;width:623px;height:67px"></div>
<div class="ru" style="left:810px;top:311px;background:#fff;padding:0 2px">Монопольный режим</div>
<div style="left:815px;top:337px;width:11px;height:11px;border:1px solid #333;background:#fff"></div>
<div class="ru" style="left:831px;top:337px">Разрешить приложениям использовать устройство в монопольном режиме</div>
<div style="left:815px;top:359px;width:11px;height:11px;border:1px solid #ccc;background:#fff"></div>
<div class="ru" style="left:831px;top:359px;color:#8a8a8a">Предоставить приоритет приложениям монопольного режима</div>
<div class="btn" style="left:803px;top:511px;width:118px;height:21px;font-size:12px;line-height:22px;letter-spacing:0">По умолчанию</div>
<div class="btn" style="left:1206px;top:556px;width:73px;height:21px;border:2px solid #0078d7;line-height:19px;font-size:11px;letter-spacing:0">ОК</div>
<div class="btn" style="left:1287px;top:556px;width:73px;height:21px;font-size:11px;line-height:22px;letter-spacing:0">Отмена</div>
<div class="btn" style="left:1368px;top:556px;width:73px;height:21px;background:#ccc;border-color:#bfbfbf;color:#8a8a8a;font-size:11px;line-height:22px;letter-spacing:0">Применить</div>

<!-- Volume mixer -->
<div style="left:1209px;top:663px;width:471px;height:341px;background:#fff"></div>
<svg style="left:1219px;top:668px" width="10" height="17"><path d="M0 5H4L9 0V17L4 12H0Z" fill="#8a8a8a"/></svg>
<div class="t m" style="left:1238px;top:671px;color:#888;font-size:13px">Микшер громкости - Динамики (RME Babyface Pro)</div>
<svg style="left:1661px;top:671px" width="12" height="12"><path d="M1 1L11 11M11 1L1 11" stroke="#777"/></svg>
<div class="gb" style="left:1220px;top:711px;width:112px;height:279px"></div>
<div class="gb" style="left:1333px;top:711px;width:338px;height:279px"></div>
<div class="t m" style="left:1229px;top:704px;background:#fff;padding:0 1px"><span style="text-decoration:underline">У</span>стройство</div>
<div class="t m" style="left:1342px;top:704px;background:#fff;padding:0 1px">Приложения</div>
<div style="left:1260px;top:727px;width:24px;height:29px;background:linear-gradient(135deg,#8a8a8a,#2a2a2a 55%,#111);border-radius:2px"></div>
<div style="left:1264px;top:734px;width:14px;height:14px;border-radius:50%;background:radial-gradient(#eee,#aaa)"></div>
<div class="t m" style="left:1241px;top:764px">Динамики</div>
<svg style="left:1309px;top:770px" width="9" height="5"><path d="M0 0H9L4.500 5Z" fill="#222"/></svg>
<svg style="left:1373px;top:730px" width="33" height="30"><rect x="6" y="3" width="26" height="20" fill="#1c5fb8"/><rect x="8" y="5" width="22" height="16" fill="#3a8be0"/><path d="M20 6V15" stroke="#7bc1ff" stroke-width="2"/><circle cx="17" cy="16" r="4" fill="#7bc1ff"/><rect x="1" y="11" width="7" height="13" fill="#999"/><path d="M12 24H28L30 29H10Z" fill="#c4c4c4"/></svg>
<div class="t m" style="left:1342px;top:765px">Системные звуки</div>
<div style="left:1446px;top:727px;width:1px;height:246px;background:#ddd"></div>
<div style="left:1262px;top:809px;width:6px;height:116px;background:#e3e3e3"></div>
<div style="left:1378px;top:809px;width:6px;height:116px;background:#e3e3e3"></div>
<svg style="left:1262px;top:805px;overflow:visible" width="150" height="122"><path d="M6 4H18L8 119H6ZM122 4H134L124 119H122Z" fill="#d6dfe7"/><path d="M18 4H140M122 4H140" stroke="#dbe3ea"/><path d="M18 62H23M124 62H140M6 62H23M8 119H23M124 119H140" stroke="#dfdfdf"/></svg>
<svg style="left:1260px;top:804px" width="19" height="11"><path d="M0 0H14L19 5.500 14 11H0Z" fill="#0078d7"/></svg>
<svg style="left:1376px;top:895px" width="19" height="11"><path d="M0 0H14L19 5.500 14 11H0Z" fill="#0078d7"/></svg>
<svg style="left:1265px;top:946px" width="16" height="15"><path d="M0 5H3L7 1V14L3 10H0Z" fill="#0a64c2"/><path d="M9 4Q11 7.500 9 11M11.500 2Q15 7.500 11.500 13" fill="none" stroke="#0a64c2" stroke-width="1.300"/></svg>
<svg style="left:1381px;top:946px" width="16" height="15"><path d="M0 5H3L7 1V14L3 10H0Z" fill="#0a64c2"/><path d="M9 4Q11 7.500 9 11M11.500 2Q15 7.500 11.500 13" fill="none" stroke="#0a64c2" stroke-width="1.300"/></svg>

<!-- Taskbar -->
<div style="left:10px;top:1012px;width:1670px;height:38px;background:linear-gradient(90deg,#223a45,#213843 40%,#1c3044 70%,#1b2e48)"></div>
<div style="left:257px;top:1012px;width:48px;height:38px;background:#4a5f6a"></div>
<svg style="left:26px;top:1023px" width="17" height="17"><path d="M0 2.500L7 1.500V8H0ZM8 1.300L17 0V8H8ZM0 9H7V15.500L0 14.500ZM8 9H17V17L8 15.700Z" fill="#fff"/></svg>
<svg style="left:74px;top:1021px" width="22" height="20"><path d="M0 0H9L11 3H22V20H0Z" fill="#f7ce58"/><path d="M0 3H22V7H0Z" fill="#e9b83f"/><path d="M6 14H16V20H13V17H9V20H6Z" fill="#3b8fd6"/></svg>
<svg style="left:122px;top:1020px" width="22" height="24"><path d="M8 1L21 3 19 22 2 18Z" fill="#bfe6ea"/><path d="M8 1L2 18 0 15Z" fill="#3a87a8"/><path d="M19 22L21 3 22 5 20 23Z" fill="#9a9a8a"/></svg>
<svg style="left:171px;top:1019px" width="24" height="25"><ellipse cx="12" cy="12.500" rx="9" ry="10.500" fill="none" stroke="#e3141d" stroke-width="5"/></svg>
<svg style="left:219px;top:1019px" width="24" height="25"><ellipse cx="11" cy="12.500" rx="9" ry="11" fill="#c0c4c6"/><ellipse cx="12" cy="12.500" rx="6" ry="8" fill="#8a9094"/><circle cx="11" cy="12" r="3" fill="#ddd"/><path d="M17 4Q22 12 17 21" fill="#777"/></svg>
<svg style="left:269px;top:1020px" width="22" height="23"><ellipse cx="9" cy="11.500" rx="8" ry="10.500" fill="#e6e6e6"/><ellipse cx="10" cy="11.500" rx="4.500" ry="6.500" fill="#9a9a9a"/><path d="M14 3Q22 11 14 22Z" fill="#333"/></svg>
<div style="left:318px;top:1020px;width:24px;height:24px;background:linear-gradient(#ef6a28,#e8581f)"></div>
<svg style="left:325px;top:1027px" width="10" height="10"><path d="M5 0H7V2H5ZM5 3H7V5H5ZM2 3H4V5H2ZM5 6H7V8H5ZM2 6H4V8H2ZM8 6H10V8H8Z" fill="#fff"/></svg>

<svg style="left:1325px;top:1027px" width="12" height="8"><path d="M1 7L6 1 11 7" fill="none" stroke="#ddd" stroke-width="1.400"/></svg>
<div style="left:1347px;top:1024px;width:15px;height:16px;background:linear-gradient(#8a8a8a 0 7px,#fff 7px);"></div>
<div style="left:1350px;top:1026px;width:3px;height:3px;background:#c22;border-radius:50%"></div><div style="left:1356px;top:1026px;width:3px;height:3px;background:#c22;border-radius:50%"></div>
<div style="left:1348px;top:1032px;width:13px;height:5px;background:repeating-linear-gradient(90deg,#222 0 1px,#fff 1px 2.500px)"></div>
<svg style="left:1373px;top:1023px" width="12" height="16"><path d="M6 0L12 2V9Q11 14 6 16 1 14 0 9V2Z" fill="#1f9a88"/><path d="M3 8L5.500 10.500 9 6" stroke="#fff" fill="none" stroke-width="1.300"/></svg>
<svg style="left:1396px;top:1023px" width="17" height="17"><path d="M7 0L13 2V8Q12 13 7 15 1 13 0 8V2Z" fill="#fff"/><path d="M7 0V15M0 7H13" stroke="#223"/><path d="M12 7L17 16H7Z" fill="#f6c430"/></svg>
<svg style="left:1422px;top:1023px" width="14" height="17"><path d="M2 5H8V16H2ZM3 1H7V5H3Z" fill="none" stroke="#ddd"/><path d="M9 14L11 16 14 12" fill="none" stroke="#ddd"/></svg>
<div style="left:1443px;top:1024px;width:16px;height:16px;background:#555;border-radius:3px"></div>
<svg style="left:1443px;top:1024px" width="16" height="16"><circle cx="8" cy="8" r="5.500" fill="none" stroke="#ddd" stroke-width="1.500"/><path d="M8 8L11 4" stroke="#e8632a" stroke-width="1.500"/></svg>
<div style="left:1467px;top:1025px;width:16px;height:14px;background:linear-gradient(#a33214,#f09a28 55%,#333 60%)"></div>
<svg style="left:1491px;top:1023px" width="17" height="16"><path d="M4 2H16V11H4ZM10 11V15M6 15H14" fill="none" stroke="#ddd"/><rect x="0.500" y="0.500" width="6" height="6" fill="#223" stroke="#ddd"/></svg>
<svg style="left:1515px;top:1024px" width="17" height="14"><path d="M0.500 5H3L6.500 1V13L3 9H0.500Z" fill="none" stroke="#ddd"/><path d="M9 4Q11 7 9 10M12 2Q15 7 12 12" fill="none" stroke="#ddd"/></svg>
<div class="t" style="left:1540px;top:1024px;width:26px;text-align:center;color:#ddd;font-size:11.5px">РУС</div>
<div class="t" style="left:1574px;top:1015px;width:60px;text-align:center;color:#ddd;font-size:11.5px">16:32</div>
<div class="t" style="left:1574px;top:1033px;width:60px;text-align:center;color:#ddd;font-size:11.5px">05.12.2022</div>
<svg style="left:1649px;top:1023px" width="17" height="16"><path d="M0.500 0.500H16V11.500H10L8 14.500 6 11.500H0.500Z" fill="none" stroke="#ddd"/></svg>

<!-- Red annotations -->
<svg style="left:0;top:0;pointer-events:none" width="1680" height="1050" fill="none" stroke="#d81f26" stroke-width="2.400" stroke-linecap="round" stroke-linejoin="round">
<path d="M640 128L622 140 579 160 545 180 514 197 499 210 465 233 397 263"/>
<path d="M397 263L420 266 448 267M429 230L402 262"/>
<path d="M640 128L630 158M640 128L606 131"/>
<path d="M664 122L690 124 718 129M664 122L671 130 684 167"/>
<path d="M664 122L690 135 712 150 732 170 758 193 770 207 787 233 813 263"/>
<path d="M811 232L813 263M773 247L790 254 813 263"/>
</svg>

</div></body></html>
